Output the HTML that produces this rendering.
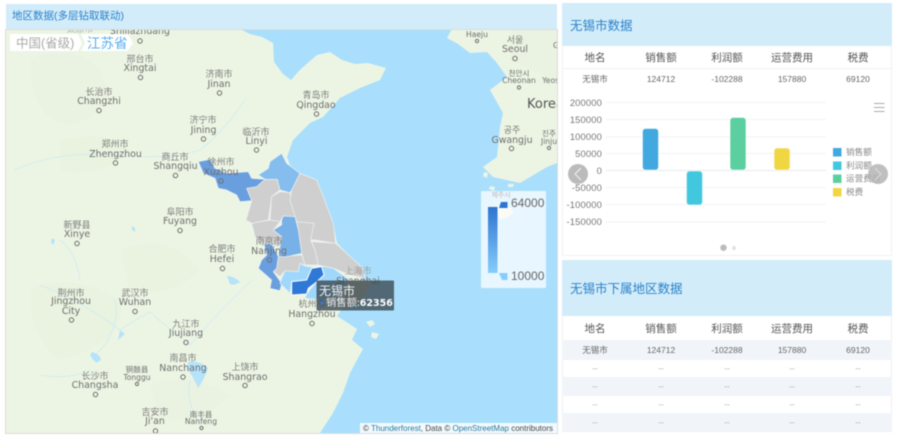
<!DOCTYPE html>
<html lang="zh"><head><meta charset="utf-8"><title>地区数据</title>
<style>
html,body{margin:0;padding:0;background:#fff;width:900px;height:436px;overflow:hidden}
body{position:relative;font-family:"Liberation Sans","Noto Sans CJK SC",sans-serif;filter:blur(.45px)}
.a{position:absolute}
.hd{background:#d3ecfa;color:#2a82c8}
.row{position:absolute;left:0;width:330px;display:flex;align-items:center}
.row span{position:absolute;width:66px;text-align:center;white-space:nowrap}
.row span:nth-child(1){left:0}.row span:nth-child(2){left:66px}.row span:nth-child(3){left:132px}.row span:nth-child(4){left:197px}.row span:nth-child(5){left:263px}
.th{font-size:10.5px;color:#555}.td{font-size:8.5px;color:#666}.dd{font-size:8px;color:#aaa}
svg text{font-family:"DejaVu Sans","Noto Sans CJK SC",sans-serif}
.m text{fill:#6e6e6e;text-anchor:middle}
.m .c{font-family:"Noto Sans CJK SC",sans-serif;font-size:9px;fill:#7c7c7c}
.m .l{font-size:9.4px}
.m .s{font-size:7.6px}
.m circle{fill:none;stroke:#6e6e6e;stroke-width:1}
</style></head><body>

<div class="a hd" style="left:6px;top:4px;width:551px;height:25px;line-height:25px;font-size:10.5px;text-indent:6px">地区数据(多层钻取联动)</div>

<svg class="a m" style="left:5px;top:29px" width="553" height="405" viewBox="5 29 553 405">
<rect x="5" y="29" width="553" height="405" fill="#a9dffc"/>
<path fill="#ecf5e4" d="M6 29H240L250 34 262 37 273 43 274 62 283 74 291 80 298 72 302 68 317 55 330 52 342 60 355 64 368 63 386 68 380 80 360 88 340 98 323 117 310 123 293 140 287 157 293 173 300 173 317 180 333 223 337 243 363 270 360 285 343 307 337 316 357 329 352 340 363 349 350 373 343 393 333 413 320 433H6Z"/>
<path fill="#ecf5e4" d="M452 29L447 38 458 44 470 53 487 52 497 63 507 77 490 90 503 113 500 127 497 157 483 167 493 177 520 183 547 167 557 163V29Z"/>
<!-- islands -->
<g fill="#ecf5e4"><path d="M366 322l6-2 3 4-5 3Z"/><path d="M372 332l7 2-3 5-5-2Z"/><path d="M484 172l4 1-1 5-4-2Z"/><path d="M490 186l5 1-1 4-5-2Z"/><path d="M508 184l6 0-1 3-5 0Z"/></g>
<!-- soft terrain -->
<g fill="#e3efd9" opacity=".3">
<path d="M30 60Q70 40 100 70 120 110 70 125 30 120 30 60Z"/>
<path d="M60 140Q110 130 130 150 100 180 60 170Z"/>
<path d="M30 290Q70 270 120 300 130 340 60 360 30 340 30 290Z"/>
<path d="M150 385Q190 370 230 395 200 425 160 420Z"/>
<path d="M120 250Q170 230 200 270 170 300 130 290Z"/>
<path d="M510 30Q535 30 557 30V80Q530 70 510 60Z"/>
</g>
<!-- rivers and lakes -->
<g fill="none" stroke="#cfeaf2" stroke-width=".8">
<path d="M14 170Q60 150 118 155 170 160 200 150 225 130 245 100"/>
<path d="M115 300Q120 320 105 345 95 355 92 360"/>
<path d="M40 285Q80 300 120 330 135 320 150 312 170 330 190 345 220 310 252 280 262 262"/>
<path d="M40 375Q70 380 90 370"/>
<path d="M190 380Q185 400 200 425"/>
<path d="M60 240Q75 250 80 280"/>
</g>
<g fill="#b5e3f9">
<path d="M227 276Q234 276 240 282 234 286 230 284Z"/>
<path d="M92 352Q100 354 101 360L96 363Q92 358 90 355Z"/>
<path d="M188 362Q200 360 208 368 205 378 198 388 194 378 188 370Z"/>
<path d="M120 330L125 334 118 340Z"/>
<path d="M52 238l3 2-2 5-2-3Z"/><path d="M132 226l3 2 0 4-3-2Z"/><path d="M173 175l2 2-2 2Z"/>
</g>

<!-- Jiangsu -->
<g transform="translate(190 140) scale(.3333)" stroke="#eef2f2" stroke-width="2" stroke-linejoin="round">
<path fill="#cfcfcf" d="M170 145L225 118 262 118 270 150 245 170 235 240 185 250 168 240 180 200 185 182Z"/>
<path fill="#cfcfcf" d="M270 155L300 158 305 190 320 240 280 228 270 245 240 240 245 170Z"/>
<path fill="#cfcfcf" d="M305 150L330 100 380 120 400 170 430 250 437 310 375 300 360 300 372 250 320 245 300 180Z"/>
<path fill="#cfcfcf" d="M185 250L240 240 270 245 250 270 275 290 270 320 222 312 210 300 195 290Z"/>
<path fill="#cfcfcf" d="M265 350L335 345 345 375 330 370 325 395 285 392 270 410 250 395 260 385Z"/>
<path fill="#cfcfcf" d="M320 245L372 250 362 300 375 330 385 375 345 375 335 340 325 270Z"/>
<path fill="#cfcfcf" d="M365 305L437 310 520 385 525 415 480 405 430 385 385 375 375 330Z"/>
<path fill="#6a9fdf" d="M25 65L60 58 75 85 110 100 175 95 185 115 225 118 200 140 170 145 185 182 150 185 140 165 110 150 85 145 75 115 40 100Z"/>
<path fill="#85bdee" d="M205 105L235 85 240 65 275 40 290 70 330 100 305 150 300 158 270 150 262 118 225 118Z"/>
<path fill="#78b0e8" d="M275 240L280 228 315 230 325 270 335 340 290 350 265 350 270 320 275 290 250 270 275 255Z"/>
<path fill="#6a9fdf" d="M222 312L245 312 265 350 260 385 250 395 275 430 270 452 240 445 245 420 205 385 215 360 230 345Z"/>
<path fill="#a0d8fb" d="M395 378L430 385 480 420 445 465 400 480 345 475 350 462 375 430 402 405Z"/>
<path fill="#a0d8fb" d="M285 392L325 395 330 370 345 378 372 382 355 420 305 425 300 460 270 430 275 415Z"/>
<path fill="#2f78d6" stroke="#fff" stroke-width="3" d="M305 425L350 420 365 385 395 380 402 405 375 430 355 445 350 462 305 465Z"/>
</g>

<!-- labels -->
<text class="l" x="140" y="34">Shijiazhuang</text><circle cx="140" cy="41" r="2.2"/>
<text class="c" x="80" y="32" opacity=".6">太原市</text>
<text class="c" x="140" y="62">邢台市</text><text class="l" x="140" y="71">Xingtai</text><circle cx="140.500" cy="77.500" r="2.200"/>
<text class="c" x="99" y="95">长治市</text><text class="l" x="99" y="104">Changzhi</text><circle cx="99" cy="110.500" r="2.200"/>
<text class="c" x="219" y="77">济南市</text><text class="l" x="219" y="87">Jinan</text><circle cx="219.500" cy="93" r="2.200"/>
<text class="c" x="203" y="123">济宁市</text><text class="l" x="203.500" y="133">Jining</text><circle cx="203.500" cy="139" r="2.200"/>
<text class="c" x="256" y="135">临沂市</text><text class="l" x="256.500" y="144">Linyi</text><circle cx="256.500" cy="150" r="2.200"/>
<text class="c" x="115" y="147">郑州市</text><text class="l" x="115.500" y="157">Zhengzhou</text><circle cx="115.500" cy="163" r="2.200"/>
<text class="c" x="175" y="160">商丘市</text><text class="l" x="175.500" y="169">Shangqiu</text><circle cx="175.500" cy="175.500" r="2.200"/>
<text class="c" x="221" y="165">徐州市</text><text class="l" x="221" y="175">Xuzhou</text><circle cx="221" cy="181" r="2.200"/>
<text class="c" x="316" y="98">青岛市</text><text class="l" x="316" y="108">Qingdao</text><circle cx="316.500" cy="114" r="2.200"/>
<text class="c" x="180" y="215">阜阳市</text><text class="l" x="180" y="224">Fuyang</text><circle cx="180" cy="230.500" r="2.200"/>
<text class="c" x="77" y="228">新野县</text><text class="l" x="77" y="237">Xinye</text><circle cx="77" cy="243.500" r="2.200"/>
<text class="c" x="222" y="252">合肥市</text><text class="l" x="222" y="262">Hefei</text><circle cx="222.500" cy="268.500" r="2.200"/>
<text class="c" x="269" y="244">南京市</text><text class="l" x="269" y="254">Nanjing</text><circle cx="269.500" cy="260" r="2.200"/>
<text class="c" x="71" y="296">荆州市</text><text class="l" x="71" y="304">Jingzhou</text><text class="l" x="71" y="314">City</text><circle cx="71.500" cy="320" r="2.200"/>
<text class="c" x="135" y="296">武汉市</text><text class="l" x="135" y="305">Wuhan</text><circle cx="135" cy="311.500" r="2.200"/>
<text class="c" x="186" y="327">九江市</text><text class="l" x="186" y="336">Jiujiang</text><circle cx="186" cy="342.500" r="2.200"/>
<text class="c" x="183" y="361">南昌市</text><text class="l" x="183" y="371">Nanchang</text><circle cx="183" cy="377" r="2.200"/>
<text class="c" x="245" y="370">上饶市</text><text class="l" x="245" y="380">Shangrao</text><circle cx="245" cy="385.500" r="2.200"/>
<text class="c" x="95" y="379">长沙市</text><text class="l" x="95" y="388">Changsha</text><circle cx="95.500" cy="394.500" r="2.200"/>
<text class="s" x="137" y="372" style="font-family:'Noto Sans CJK SC',sans-serif">铜鼓县</text><text class="s" x="137" y="380">Tonggu</text><circle cx="137" cy="384" r="1.600"/>
<text class="c" x="155" y="415">吉安市</text><text class="l" x="155" y="424">Ji'an</text><circle cx="155.500" cy="431" r="2.200"/>
<text class="s" x="201" y="417" style="font-family:'Noto Sans CJK SC',sans-serif">南丰县</text><text class="s" x="201" y="424">Nanfeng</text><circle cx="201.500" cy="428" r="1.600"/>
<text class="c" x="312" y="307">杭州市</text><text class="l" x="312" y="317">Hangzhou</text><circle cx="312" cy="323.500" r="2.200"/>
<text class="c" x="358" y="274" opacity=".6">上海市</text><text class="l" x="358" y="284">Shanghai</text>
<text class="s" x="477" y="37">Haeju</text><circle cx="477" cy="41" r="1.600"/>
<text class="c" x="515" y="43">서울</text><text class="l" x="515" y="52">Seoul</text><circle cx="515" cy="58.500" r="2.200"/>
<text class="s" x="519" y="76" style="font-family:'Noto Sans CJK KR',sans-serif">천안시</text><text class="s" x="519" y="83">Cheonan</text><circle cx="519" cy="87.500" r="1.600"/>
<text x="527" y="108" style="font-size:13px;text-anchor:start;fill:#555;font-weight:500">Korea</text>
<text class="c" x="512" y="133">공주</text><text class="l" x="512" y="143">Gwangju</text><circle cx="511.500" cy="148.500" r="2.200"/>
<text class="s" x="549" y="136" style="font-family:'Noto Sans CJK KR',sans-serif">진주</text><text class="s" x="549" y="144">Jinju</text><circle cx="549" cy="148" r="1.600"/>
<text class="s" x="553" y="83">Yeosu</text>
<text class="s" x="556" y="48">G</text>

<!-- visual map -->
<rect x="481" y="191" width="65" height="97" rx="1" fill="#eaf7ff" fill-opacity=".96"/>
<path d="M497 206Q508 205 514 211 508 220 499 219Z" fill="#fbfbf4"/>
<text x="501" y="197" style="font-size:7px;fill:#bbb;font-family:'Noto Sans CJK KR',sans-serif">제주시</text>
<defs><linearGradient id="g" x1="0" y1="0" x2="0" y2="1"><stop offset="0" stop-color="#2f74cf"/><stop offset="1" stop-color="#85cefc"/></linearGradient></defs>
<rect x="488" y="207" width="9.500" height="66" fill="url(#g)"/>
<path d="M499 208L501 202H507.500V208Z" fill="#2f74cf"/>
<path d="M499 273H507.500V280H502Z" fill="#85cefc"/>
<text x="511" y="207" style="font-size:12px;text-anchor:start;fill:#666;font-family:'Liberation Sans',sans-serif">64000</text>
<text x="511" y="280" style="font-size:12px;text-anchor:start;fill:#666;font-family:'Liberation Sans',sans-serif">10000</text>

<!-- tooltip -->
<path d="M345 281H372L362 300 345 310Z" fill="#dccfae"/>
<rect x="316.500" y="280.500" width="77.500" height="30" rx="1" fill="#3c4a52" fill-opacity=".8"/>
<circle cx="322" cy="303" r="1.800" style="fill:#2f78d6;stroke:none"/>
<text x="319" y="295" style="font-size:12px;text-anchor:start;fill:#f4f4f4;font-family:'Noto Sans CJK SC',sans-serif">无锡市</text>
<text x="326" y="306" style="font-size:10.300px;text-anchor:start;fill:#eee;font-family:'Noto Sans CJK SC',sans-serif">销售额:<tspan font-weight="bold" fill="#fff" style="font-family:'DejaVu Sans',sans-serif;font-size:9.500px">62356</tspan></text>

<!-- attribution -->
<rect x="360" y="423" width="197" height="10" fill="#fff" fill-opacity=".85"/>
<text x="363" y="431" textLength="190" lengthAdjust="spacingAndGlyphs" style="font-size:8.300px;text-anchor:start;fill:#444;font-family:'Liberation Sans',sans-serif">© <tspan fill="#2a7a9a">Thunderforest</tspan>, Data © <tspan fill="#2a7a9a">OpenStreetMap</tspan> contributors</text>
<rect x="5.500" y="29.500" width="552" height="404" fill="none" stroke="#dcdcdc"/>
</svg>

<!-- top right panel -->
<div class="a" style="left:562px;top:3px;width:330px;height:253px;box-sizing:border-box;border:1px solid #f0f1f2;border-top:0;background:#fff"></div>
<div class="a hd" style="left:562px;top:3px;width:330px;height:43px;line-height:47px;font-size:12.500px;text-indent:8px">无锡市数据</div>
<div class="a" style="left:562px;top:46px;width:330px;height:45px">
<div class="row th" style="top:0;height:22px;border-bottom:1px solid #eef1f4"><span>地名</span><span>销售额</span><span>利润额</span><span>运营费用</span><span>税费</span></div>
<div class="row td" style="top:23px;height:20px"><span>无锡市</span><span>124712</span><span>-102288</span><span>157880</span><span>69120</span></div>
</div>
<svg class="a" style="left:562px;top:91px" width="330" height="164" viewBox="562 91 330 164">
<g stroke="#f1f3f5" stroke-width="1">
<path d="M606 102.500H826M606 119.500H826M606 137H826M606 153.500H826M606 187.500H826M606 204.500H826M606 222H826"/>
<path d="M606 170.500H826" stroke="#e8eaec"/>
</g>
<g style="font-size:9.400px;fill:#777" text-anchor="end" letter-spacing=".15">
<text x="602" y="106" style="font-family:'Liberation Sans',sans-serif">200000</text>
<text x="602" y="123" style="font-family:'Liberation Sans',sans-serif">150000</text>
<text x="602" y="140" style="font-family:'Liberation Sans',sans-serif">100000</text>
<text x="602" y="157" style="font-family:'Liberation Sans',sans-serif">50000</text>
<text x="602" y="174" style="font-family:'Liberation Sans',sans-serif">0</text>
<text x="602" y="191" style="font-family:'Liberation Sans',sans-serif">-50000</text>
<text x="602" y="208" style="font-family:'Liberation Sans',sans-serif">-100000</text>
<text x="602" y="225" style="font-family:'Liberation Sans',sans-serif">-150000</text>
</g>
<g stroke="#fff" stroke-opacity=".7" stroke-width=".8">
<rect x="642.500" y="128.500" width="16" height="41.500" rx="3" fill="#42a9e0"/>
<rect x="686.500" y="171" width="16" height="34" rx="3" fill="#42c8de"/>
<rect x="730" y="117.500" width="16" height="52.500" rx="3" fill="#5bcf9f"/>
<rect x="774" y="148" width="16" height="22" rx="3" fill="#f1d643"/>
</g>
<g>
<rect x="833" y="148" width="8.500" height="8.500" fill="#42a9e0"/><rect x="833" y="161.500" width="8.500" height="8.500" fill="#42c8de"/>
<rect x="833" y="174.500" width="8.500" height="8.500" fill="#5bcf9f"/><rect x="833" y="188" width="8.500" height="8.500" fill="#f1d643"/>
</g>
<g style="font-size:8.600px;fill:#888">
<text x="846" y="155" style="font-family:'Noto Sans CJK SC',sans-serif">销售额</text>
<text x="846" y="168.500" style="font-family:'Noto Sans CJK SC',sans-serif">利润额</text>
<text x="846" y="181.500" style="font-family:'Noto Sans CJK SC',sans-serif">运营费用</text>
<text x="846" y="195" style="font-family:'Noto Sans CJK SC',sans-serif">税费</text>
</g>
<path d="M874 103.500H884.500M874 107.500H884.500M874 111.500H884.500" stroke="#aaa" stroke-width="1"/>
<circle cx="578" cy="174" r="10" fill="#b4b4b4" fill-opacity=".9"/>
<path d="M581 168L575 174 581 180" fill="none" stroke="#f2f2f2" stroke-width="1"/>
<circle cx="878" cy="174" r="10" fill="#b4b4b4" fill-opacity=".85"/>
<path d="M875 168L881 174 875 180" fill="none" stroke="#ddd" stroke-width="1"/>
<circle cx="723.500" cy="247.700" r="3.200" fill="#bbb"/><circle cx="734" cy="248" r="2" fill="#e2e2e2"/>
</svg>

<!-- bottom right panel -->
<div class="a" style="left:562px;top:260px;width:330px;height:172px;box-sizing:border-box;border:1px solid #eef0f2;border-top:0;background:#fff"></div>
<div class="a hd" style="left:562px;top:260px;width:330px;height:56px;line-height:58px;font-size:12.500px;text-indent:8px">无锡市下属地区数据</div>
<div class="a" style="left:562px;top:316px;width:330px;height:115px">
<div class="row th" style="top:0;height:24px"><span>地名</span><span>销售额</span><span>利润额</span><span>运营费用</span><span>税费</span></div>
<div class="row td" style="top:24px;height:20px;background:#f1f5f9"><span>无锡市</span><span>124712</span><span>-102288</span><span>157880</span><span>69120</span></div>
<div class="row dd" style="top:44px;height:17px"><span>--</span><span>--</span><span>--</span><span>--</span><span>--</span></div>
<div class="row dd" style="top:61px;height:19px;background:#f1f5f9"><span>--</span><span>--</span><span>--</span><span>--</span><span>--</span></div>
<div class="row dd" style="top:80px;height:17px"><span>--</span><span>--</span><span>--</span><span>--</span><span>--</span></div>
<div class="row dd" style="top:97px;height:18px;background:#f1f5f9"><span>--</span><span>--</span><span>--</span><span>--</span><span>--</span></div>
</div>

<!-- breadcrumb -->
<svg class="a" style="left:10px;top:34px" width="124" height="18" viewBox="0 0 124 18">
<path d="M0 0H68L72 9 68 17H0Z" fill="#fff" fill-opacity=".95"/>
<path d="M71 0H118L123 9 118 17H71L75 9Z" fill="#fff" fill-opacity=".95"/>
<text x="6" y="13.500" style="font-size:12.500px;fill:#aaa;font-family:'Liberation Sans','Noto Sans CJK SC',sans-serif">中国(省级)</text>
<text x="77" y="14" style="font-size:13.500px;fill:#5aaeee;font-family:'Noto Sans CJK SC',sans-serif">江苏省</text>
</svg>
</body></html>
